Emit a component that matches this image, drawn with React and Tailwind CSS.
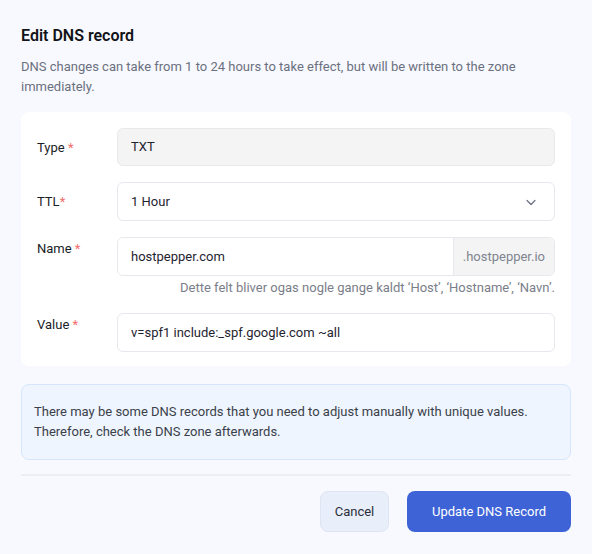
import React from "react";

const font = { fontFamily: "Roboto, 'Noto Sans', sans-serif" };

const Row = ({ label, star = " *", top = false, children }) => (
  <div className="flex items-start">
    <label
      className={
        "w-[80px] shrink-0 text-[13px] font-normal text-[#1a1d26] " +
        (top ? "pt-[2px]" : "pt-[10px]")
      }
    >
      {label}
      <span className="text-[#f26d6d]">{star}</span>
    </label>
    <div className="flex-1 min-w-0">{children}</div>
  </div>
);

const inputCls =
  "w-full h-[39px] px-[13px] rounded-[6px] border border-[#e6e8ee] text-[13px] text-[#1f2430] bg-white outline-none";

export default function App() {
  return (
    <div className="min-h-[554px] bg-[#f8f9fe] px-[21px] pt-[25px] pb-[22px]" style={font}>
      <h2 className="text-[16px] font-semibold text-[#111318] leading-[22px]">
        Edit DNS record
      </h2>
      <p className="mt-[10px] text-[13px] leading-[20px] text-[#6b7080]">
        DNS changes can take from 1 to 24 hours to take effect, but will be
        written to the zone immediately.
      </p>

      <div className="mt-[15px] bg-white rounded-[8px] px-[16px] pt-[16px] pb-[14px] flex flex-col gap-[16px]">
        <Row label="Type">
          <div className="h-[38px] px-[13px] flex items-center rounded-[6px] border border-[#e8e9ed] bg-[#f4f4f5] text-[13px] text-[#1f2430]">
            TXT
          </div>
        </Row>
        <Row label="TTL" star="*">
          <div className="h-[39px] px-[13px] flex items-center justify-between rounded-[6px] border border-[#e6e8ee] bg-white text-[13px] text-[#1f2430]">
            <span>1 Hour</span>
            <svg width="12" height="12" viewBox="0 0 12 12" fill="none" className="mr-[4px]">
              <path d="M2 4.5l4 4 4-4" stroke="#6b7080" strokeWidth="1.2" strokeLinecap="round" strokeLinejoin="round" />
            </svg>
          </div>
        </Row>
        <Row label="Name" top>
          <div className="flex h-[39px] rounded-[6px] border border-[#e6e8ee] overflow-hidden">
            <input
              readOnly
              value="hostpepper.com"
              className="flex-1 min-w-0 px-[13px] text-[13px] text-[#1f2430] bg-white outline-none"
            />
            <div className="px-[9px] flex items-center bg-[#f4f4f5] border-l border-[#e6e8ee] text-[13px] text-[#80848f]">
              .hostpepper.io
            </div>
          </div>
          <p className="mt-[3px] text-right text-[13px] leading-[18px] text-[#7a7e89]">
            Dette felt bliver ogas nogle gange kaldt ‘Host’, ‘Hostname’, ‘Navn’.
          </p>
        </Row>
        <Row label="Value" top>
          <input readOnly value="v=spf1 include:_spf.google.com ~all" className={inputCls} />
        </Row>
      </div>

      <div className="mt-[18px] rounded-[8px] border border-[#d6e6fb] bg-[#eef5fe] px-[12px] py-[17px] text-[13px] leading-[20px] text-[#3b3f4a]">
        There may be some DNS records that you need to adjust manually with
        unique values. Therefore, check the DNS zone afterwards.
      </div>

      <div className="mt-[14px] h-[2px] bg-[#eceef3]" />

      <div className="mt-[15px] flex justify-end gap-[18px]">
        <button className="h-[41px] w-[69px] rounded-[8px] border border-[#dfe4f2] bg-[#e9eefb] text-[13px] font-normal text-[#2a2e38]">
          Cancel
        </button>
        <button className="h-[41px] w-[164px] rounded-[8px] bg-[#3d63d6] text-[13px] font-normal text-white">
          Update DNS Record
        </button>
      </div>
    </div>
  );
}
